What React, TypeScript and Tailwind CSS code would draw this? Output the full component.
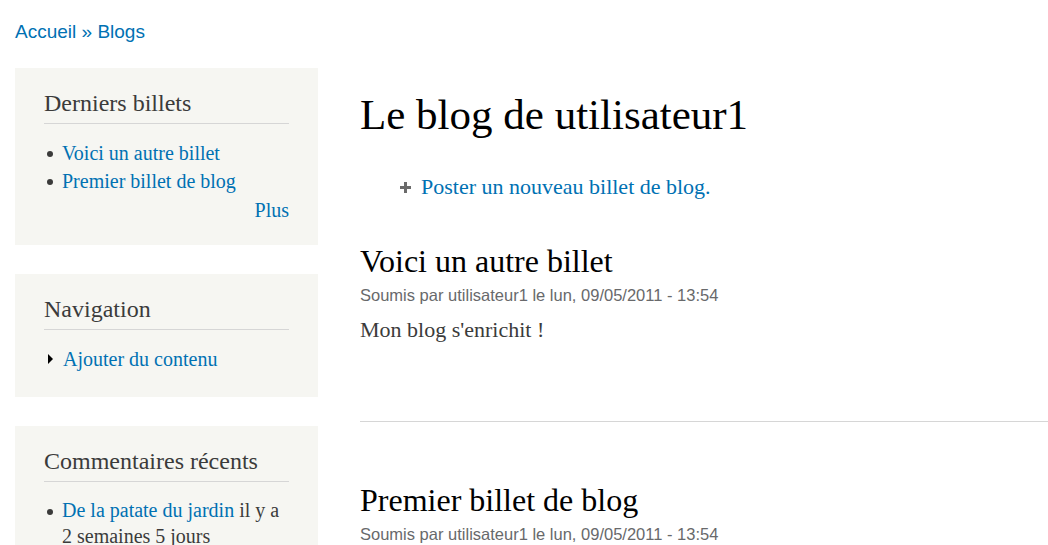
import React from 'react';

const serif = 'font-["Georgia","Liberation_Serif",serif]';
const sans = 'font-["Liberation_Sans",Arial,sans-serif]';

function Block({ title, children }: { title: string; children: React.ReactNode }) {
  return (
    <section className="bg-[#f6f6f2] px-[29px] pt-[20px] pb-[20px]">
      <h2 className={`${serif} text-[24px] leading-[30px] text-[#3b3b3b] pb-[5px] border-b border-[#d6d6d6] mb-[15px]`}>
        {title}
      </h2>
      {children}
    </section>
  );
}

function Bullet() {
  return <span className="w-[6px] h-[6px] rounded-full bg-[#3b3b3b] shrink-0 mt-[12px] mr-[9px]" />;
}

function Post({ title, body }: { title: string; body?: string }) {
  return (
    <article>
      <h2 className={`${serif} text-[32px] leading-[36px] text-[#000]`}>{title}</h2>
      <div className={`${sans} text-[16.5px] leading-[20px] text-[#68696b] mt-[6px]`}>
        Soumis par utilisateur1 le lun, 09/05/2011 - 13:54
      </div>
      {body && <p className={`${serif} text-[22px] leading-[28px] text-[#3b3b3b] mt-[11px]`}>{body}</p>}
    </article>
  );
}

export default function App() {
  return (
    <div className="bg-white min-h-screen pl-[15px] pt-[19px] overflow-hidden">
      <nav className={`${sans} text-[19px] leading-[26px] text-[#0071b3]`}>
        <a href="#">Accueil</a> <span>»</span> <a href="#">Blogs</a>
      </nav>

      <div className="flex mt-[23px]">
        {/* Sidebar */}
        <aside className="w-[303px] shrink-0 flex flex-col gap-[29px]">
          <Block title="Derniers billets">
            <ul className={`${serif} text-[20px] leading-[28px] text-[#0071b3]`}>
              <li className="flex items-start pl-[3px]"><Bullet /><a href="#">Voici un autre billet</a></li>
              <li className="flex items-start pl-[3px]"><Bullet /><a href="#">Premier billet de blog</a></li>
            </ul>
            <div className={`${serif} text-[20px] leading-[28px] text-right text-[#0071b3] pt-[1px] pb-[1px]`}>
              <a href="#">Plus</a>
            </div>
          </Block>

          <Block title="Navigation">
            <ul className={`${serif} text-[20px] leading-[28px] text-[#0071b3] pb-[4px]`}>
              <li className="flex items-start pl-[4px]">
                <svg width="5" height="10" viewBox="0 0 5 10" className="mt-[9px] mr-[10px] shrink-0">
                  <path d="M0 0 L5 5 L0 10 Z" fill="#000" />
                </svg>
                <a href="#">Ajouter du contenu</a>
              </li>
            </ul>
          </Block>

          <Block title="Commentaires récents">
            <ul className={`${serif} text-[20px] leading-[26px] text-[#3b3b3b] mt-[1px]`}>
              <li className="flex items-start pl-[3px]">
                <Bullet />
                <span>
                  <a href="#" className="text-[#0071b3]">De la patate du jardin</a> il y a
                  <br />
                  2 semaines 5 jours
                </span>
              </li>
            </ul>
          </Block>
        </aside>

        {/* Main */}
        <main className="flex-1 ml-[42px] min-w-0">
          <h1 className={`${serif} text-[43px] leading-[50px] text-[#000] mt-[22px]`}>Le blog de utilisateur1</h1>
          <div className={`${serif} text-[22px] leading-[26px] flex items-center ml-[40px] mt-[34px]`}>
            <svg width="11" height="11" viewBox="0 0 11 11" className="mr-[10px]">
              <path d="M4 0h3v4h4v3H7v4H4V7H0V4h4z" fill="#6b6b6b" />
            </svg>
            <a href="#" className="text-[#0071b3]">Poster un nouveau billet de blog.</a>
          </div>

          <div className="mt-[43px]">
            <Post title="Voici un autre billet" body="Mon blog s'enrichit !" />
          </div>
          <hr className="border-0 border-t border-[#d6d6d6] mt-[77px]" />
          <div className="mt-[60px]">
            <Post title="Premier billet de blog" />
          </div>
        </main>
      </div>
    </div>
  );
}
